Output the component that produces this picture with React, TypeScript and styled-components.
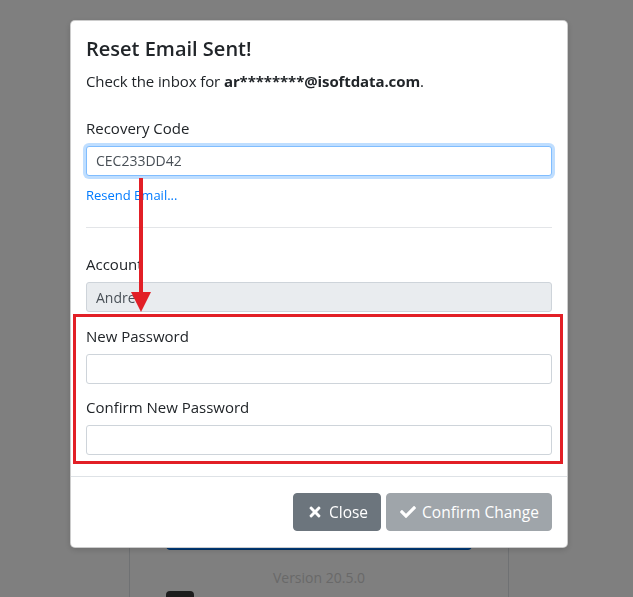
import styled, { createGlobalStyle } from "styled-components";
import { FaTimes, FaCheck } from "react-icons/fa";

const GlobalStyle = createGlobalStyle`
  html, body {
    margin: 0;
    padding: 0;
    background: #ffffff;
    overflow: hidden;
  }
  * {
    box-sizing: border-box;
  }
  body {
    font-family: "Open Sans", "Noto Sans", sans-serif;
    color: #212529;
  }
`;

const Page = styled.div`
  height: 597px;
  padding-top: 40px;
  overflow: hidden;
`;

const LoginCard = styled.div`
  margin-left: 129px;
  width: 380px;
  height: 557px;
  border: 1px solid #dee2e6;
  border-bottom: none;
  background: #fff;
  padding: 469px 36px 0;
  display: flex;
  flex-direction: column;
  overflow: hidden;
`;

const LoginButton = styled.div`
  flex: none;
  height: 40px;
  border-radius: 4px;
  background: #007bff;
  border: 1px solid #0062cc;
`;

const Version = styled.div`
  margin-top: 17px;
  text-align: center;
  font-size: 14px;
  line-height: 21px;
  color: #d2d2d2;
`;

const AppIcon = styled.div`
  flex: none;
  margin-top: 3px;
  width: 28px;
  height: 28px;
  border-radius: 4px;
  background: #3a3a3a;
`;

const Backdrop = styled.div`
  position: fixed;
  inset: 0;
  background: rgba(0, 0, 0, 0.5);
`;

const ModalLayer = styled.div`
  position: fixed;
  inset: 0;
  padding: 20px 0 0 70px;
`;

const Modal = styled.div`
  position: relative;
  width: 498px;
  background: #fff;
  border: 1px solid rgba(0, 0, 0, 0.2);
  border-radius: 5px;
  box-shadow: 0 2px 6px rgba(0, 0, 0, 0.15);
`;

const Body = styled.div`
  padding: 16px 15px 21px 15px;
`;

const Title = styled.h5`
  margin: 0 0 9px;
  font-size: 20px;
  line-height: 24px;
  font-weight: 600;
`;

const Lead = styled.p`
  margin: 0 0 24px;
  font-size: 15px;
  line-height: 22.5px;
  letter-spacing: -0.1px;
  b {
    font-weight: 700;
  }
`;

const Group = styled.div<{ gap?: number }>`
  margin-bottom: ${(p) => p.gap ?? 0}px;
`;

const Label = styled.label`
  display: block;
  font-size: 15px;
  line-height: 22px;
  margin-bottom: 7px;
`;

const Input = styled.input<{ focused?: boolean }>`
  display: block;
  width: 100%;
  height: 30px;
  padding: 0 9px;
  font-family: inherit;
  font-size: 14px;
  color: #495057;
  background: ${(p) => (p.disabled ? "#e9ecef" : "#fff")};
  border: 1px solid ${(p) => (p.focused ? "#80bdff" : "#ced4da")};
  border-radius: 3px;
  box-shadow: ${(p) => (p.focused ? "0 0 0 3px rgba(0, 123, 255, 0.25)" : "none")};
  outline: none;
`;

const ResendLink = styled.a`
  display: block;
  margin-top: 10px;
  font-size: 13px;
  line-height: 19.5px;
  color: #007bff;
  text-decoration: none;
`;

const Divider = styled.hr`
  margin: 22px 0 25px;
  border: 0;
  border-top: 1px solid #e3e5e8;
`;

const Highlight = styled.div`
  position: relative;
`;

const HighlightBox = styled.div`
  position: absolute;
  top: -11px;
  left: -13px;
  right: -11px;
  bottom: -9px;
  border: 3px solid #e21f26;
  pointer-events: none;
`;

const Arrow = styled.svg`
  position: absolute;
  left: 60px;
  top: 157px;
  pointer-events: none;
`;

const Footer = styled.div`
  border-top: 1px solid #dee2e6;
  padding: 16px 15px 16px;
  display: flex;
  justify-content: flex-end;
  gap: 5px;
`;

const Button = styled.button<{ faded?: boolean }>`
  display: flex;
  align-items: center;
  gap: 6px;
  height: 38px;
  padding: 0 12px 0 13px;
  font-family: inherit;
  font-size: 15.5px;
  color: #fff;
  background: #6c757d;
  border: 1px solid #6c757d;
  border-radius: 4px;
  opacity: ${(p) => (p.faded ? 0.65 : 1)};
  cursor: ${(p) => (p.faded ? "default" : "pointer")};
`;

export default function App() {
  return (
    <>
      <GlobalStyle />
      <Page>
        <LoginCard>
          <LoginButton />
          <Version>Version 20.5.0</Version>
          <AppIcon />
        </LoginCard>
      </Page>
      <Backdrop />
      <ModalLayer>
        <Modal>
          <Body>
            <Title>Reset Email Sent!</Title>
            <Lead>
              Check the inbox for <b>ar********@isoftdata.com</b>.
            </Lead>
            <Group>
              <Label>Recovery Code</Label>
              <Input focused defaultValue="CEC233DD42" />
            </Group>
            <ResendLink href="#">Resend Email...</ResendLink>
            <Divider />
            <Group gap={13}>
              <Label>Account</Label>
              <Input disabled defaultValue="Andrea" />
            </Group>
            <Highlight>
              <Group gap={12}>
                <Label>New Password</Label>
                <Input type="password" />
              </Group>
              <Group>
                <Label>Confirm New Password</Label>
                <Input type="password" />
              </Group>
              <HighlightBox />
            </Highlight>
          </Body>
          <Footer>
            <Button>
              <FaTimes size={16} /> Close
            </Button>
            <Button faded disabled>
              <FaCheck size={16} /> Confirm Change
            </Button>
          </Footer>
          <Arrow width="20" height="134" viewBox="0 0 20 134">
            <rect x="8" y="0" width="4" height="118" fill="#e21f26" />
            <polygon points="0,114 20,114 10,134" fill="#e21f26" />
          </Arrow>
        </Modal>
      </ModalLayer>
    </>
  );
}
